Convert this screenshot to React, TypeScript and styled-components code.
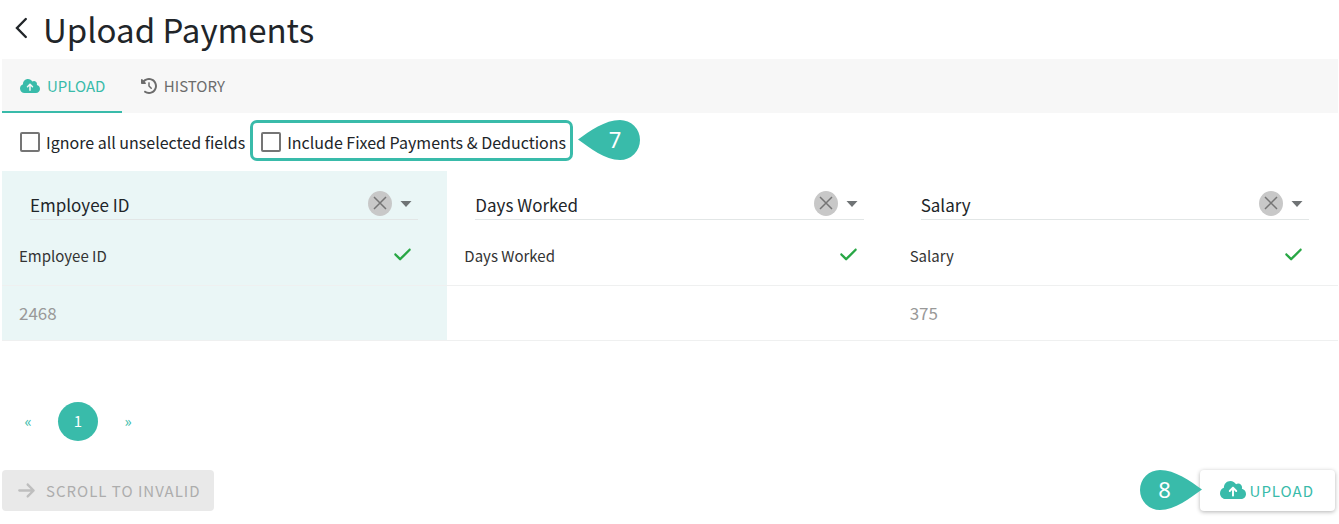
import React from 'react';
import styled, { createGlobalStyle } from 'styled-components';
import { FaArrowRight, FaCheck, FaClockRotateLeft, FaCloudArrowUp } from 'react-icons/fa6';

const teal = '#39bbaa';

const GlobalStyle = createGlobalStyle`
  *, *::before, *::after { box-sizing: border-box; }
  body {
    margin: 0;
    background: #fff;
    color: #212529;
    font-family: "Noto Sans CJK SC", "Noto Sans", sans-serif;
    font-size: 15px;
    line-height: 24px;
  }
  button, select { font: inherit; color: inherit; }
`;

const Page = styled.main`
  padding: 0 1px 0 2px;
`;

const Header = styled.header`
  display: flex;
  align-items: center;
  gap: 15px;
  height: 59px;
  padding: 0 12px 2px;
`;

const BackButton = styled.button`
  display: flex;
  margin-bottom: 2px;
  padding: 0;
  border: 0;
  background: none;
`;

const Title = styled.h1`
  margin: 0;
  font-size: 33px;
  font-weight: 400;
  line-height: 44px;
`;

const Tabs = styled.nav`
  display: flex;
  background: #f7f7f7;
`;

const Tab = styled.button<{ $active?: boolean }>`
  display: flex;
  align-items: center;
  justify-content: center;
  gap: 7px;
  min-width: 120px;
  height: 54px;
  padding: 2px 17px 0 18px;
  border: 0;
  border-bottom: 2px solid ${(p) => (p.$active ? teal : 'transparent')};
  background: none;
  color: ${(p) => (p.$active ? teal : '#6c6c6c')};
`;

const Options = styled.div`
  display: flex;
  align-items: center;
  gap: 5px;
  min-height: 58px;
  padding: 0 18px 4px;
`;

const Option = styled.label<{ $highlighted?: boolean }>`
  display: flex;
  align-items: center;
  gap: 6px;
  height: 41px;
  padding: ${(p) => (p.$highlighted ? '3px 4px 0 8px' : '3px 0 0')};
  border: ${(p) => (p.$highlighted ? `3px solid ${teal}` : '0')};
  border-radius: 7px;
  font-size: 16px;
`;

const Checkbox = styled.input`
  appearance: none;
  width: 20px;
  height: 20px;
  margin: 0;
  border: 2px solid #757575;
  border-radius: 2px;
  background: #fff;
  &:checked { background: ${teal}; }
`;

const Marker = styled.span<{ $side: 'left' | 'right' }>`
  position: relative;
  z-index: 1;
  display: grid;
  width: 62px;
  height: 40px;
  margin-right: ${(p) => (p.$side === 'right' ? '-2px' : '0')};
  color: #fff;
  font-family: "Noto Sans", sans-serif;
  font-size: 22px;
  line-height: 38px;
  > * { grid-area: 1 / 1; }
  > span {
    width: 50px;
    text-align: center;
    justify-self: ${(p) => (p.$side === 'left' ? 'end' : 'start')};
  }
`;

const Table = styled.table`
  width: 100%;
  border-collapse: collapse;
  table-layout: fixed;
`;

const Column = styled.col<{ $selected?: boolean }>`
  background: ${(p) => (p.$selected ? '#eaf6f6' : 'transparent')};
`;

const FieldCell = styled.td`
  padding: 20px 29px 8px 28px;
`;

const Field = styled.div`
  display: flex;
  align-items: center;
  height: 29px;
  border-bottom: 1px solid #e2e6e6;
`;

const FieldSelect = styled.select`
  appearance: none;
  flex: 1;
  min-width: 0;
  height: 28px;
  padding: 0;
  border: 0;
  background: none;
  font-size: 17px;
  line-height: 26px;
`;

const ClearButton = styled.button`
  display: flex;
  align-items: center;
  justify-content: center;
  width: 24px;
  height: 25px;
  margin: 0 8px 4px 0;
  padding: 0;
  border: 0;
  border-radius: 50%;
  background: #c8c8c8;
`;

const Caret = styled.svg`
  width: 12px;
  height: 6px;
  margin: 0 6px 2px 0;
`;

const NameCell = styled.th`
  height: 57px;
  padding: 0 35px 0 17px;
  border-bottom: 1px solid #eff0f0;
  color: #333;
  font-weight: 400;
  text-align: left;
`;

const NameRow = styled.div`
  display: flex;
  align-items: center;
  justify-content: space-between;
  svg { margin-bottom: 4px; }
`;

const ValueCell = styled.td`
  height: 55px;
  padding: 0 17px;
  border-bottom: 1px solid #eff0f0;
  color: #999;
  font-size: 17px;
`;

const Pagination = styled.nav`
  display: flex;
  align-items: center;
  gap: 10px;
  padding: 61px 6px 29px;
`;

const PageLink = styled.a<{ $current?: boolean }>`
  width: 40px;
  height: 39px;
  border-radius: 50%;
  background: ${(p) => (p.$current ? teal : 'none')};
  color: ${(p) => (p.$current ? '#fff' : teal)};
  line-height: 38px;
  text-align: center;
  text-decoration: none;
`;

const Footer = styled.footer`
  display: flex;
  justify-content: space-between;
  padding: 0 3px 13px 0;
`;

const Submit = styled.div`
  display: flex;
  align-items: center;
`;

const ActionButton = styled.button<{ $raised?: boolean }>`
  display: flex;
  align-items: center;
  gap: ${(p) => (p.$raised ? '4px' : '10px')};
  height: 41px;
  padding: ${(p) => (p.$raised ? '2px 21px 0 20px' : '2px 13px 0 15px')};
  border: 0;
  border-radius: 4px;
  background: ${(p) => (p.$raised ? '#fff' : '#e9e9e9')};
  box-shadow: ${(p) => (p.$raised ? '0 1px 4px rgba(0, 0, 0, 0.3)' : 'none')};
  color: ${(p) => (p.$raised ? teal : '#adadad')};
  letter-spacing: 1px;
  svg { margin-bottom: 2px; }
`;

function Callout({ side, children }: { side: 'left' | 'right'; children: React.ReactNode }) {
  return (
    <Marker $side={side}>
      <svg width="62" height="40" viewBox="0 0 62 40" aria-hidden="true">
        <path
          d="M0 19.5C12 11 27 0 42 0a20 20 0 0 1 0 40C27 40 12 28 0 19.5Z"
          fill={teal}
          transform={side === 'right' ? 'matrix(-1 0 0 1 62 0)' : undefined}
        />
      </svg>
      <span>{children}</span>
    </Marker>
  );
}

const columns = [
  { name: 'Employee ID', value: '2468', selected: true },
  { name: 'Days Worked', value: '' },
  { name: 'Salary', value: '375' },
];

export default function App() {
  return (
    <>
      <GlobalStyle />
      <Page>
        <Header>
          <BackButton aria-label="Back">
            <svg width="14" height="22" viewBox="0 0 14 22" fill="none" stroke="#212529" strokeWidth="2.4" strokeLinecap="round">
              <path d="M11.8 2 3 11l8.8 9" />
            </svg>
          </BackButton>
          <Title>Upload Payments</Title>
        </Header>

        <Tabs>
          <Tab $active>
            <FaCloudArrowUp size={20} />
            UPLOAD
          </Tab>
          <Tab>
            <FaClockRotateLeft size={16} />
            HISTORY
          </Tab>
        </Tabs>

        <Options>
          <Option>
            <Checkbox type="checkbox" />
            Ignore all unselected fields
          </Option>
          <Option $highlighted>
            <Checkbox type="checkbox" />
            Include Fixed Payments &amp; Deductions
          </Option>
          <Callout side="left">7</Callout>
        </Options>

        <Table>
          <colgroup>
            {columns.map((c) => (
              <Column key={c.name} $selected={c.selected} />
            ))}
          </colgroup>
          <thead>
            <tr>
              {columns.map((c) => (
                <FieldCell key={c.name}>
                  <Field>
                    <FieldSelect aria-label={`Field for ${c.name}`} defaultValue={c.name}>
                      <option>{c.name}</option>
                    </FieldSelect>
                    <ClearButton aria-label={`Clear ${c.name}`}>
                      <svg width="14" height="14" viewBox="0 0 14 14" stroke="#757575" strokeWidth="1.5">
                        <path d="M1 1l12 12M13 1L1 13" />
                      </svg>
                    </ClearButton>
                    <Caret viewBox="0 0 12 6" aria-hidden="true">
                      <path d="M0.5 0h11L6 6Z" fill="#6f7375" />
                    </Caret>
                  </Field>
                </FieldCell>
              ))}
            </tr>
            <tr>
              {columns.map((c) => (
                <NameCell key={c.name} scope="col">
                  <NameRow>
                    {c.name}
                    <FaCheck size={19} color="#28a745" />
                  </NameRow>
                </NameCell>
              ))}
            </tr>
          </thead>
          <tbody>
            <tr>
              {columns.map((c) => (
                <ValueCell key={c.name}>{c.value}</ValueCell>
              ))}
            </tr>
          </tbody>
        </Table>

        <Pagination aria-label="Pages">
          <PageLink href="#previous">«</PageLink>
          <PageLink href="#1" $current>1</PageLink>
          <PageLink href="#next">»</PageLink>
        </Pagination>

        <Footer>
          <ActionButton disabled>
            <FaArrowRight size={19} color="#bebebe" />
            SCROLL TO INVALID
          </ActionButton>
          <Submit>
            <Callout side="right">8</Callout>
            <ActionButton $raised>
              <FaCloudArrowUp size={26} />
              UPLOAD
            </ActionButton>
          </Submit>
        </Footer>
      </Page>
    </>
  );
}
